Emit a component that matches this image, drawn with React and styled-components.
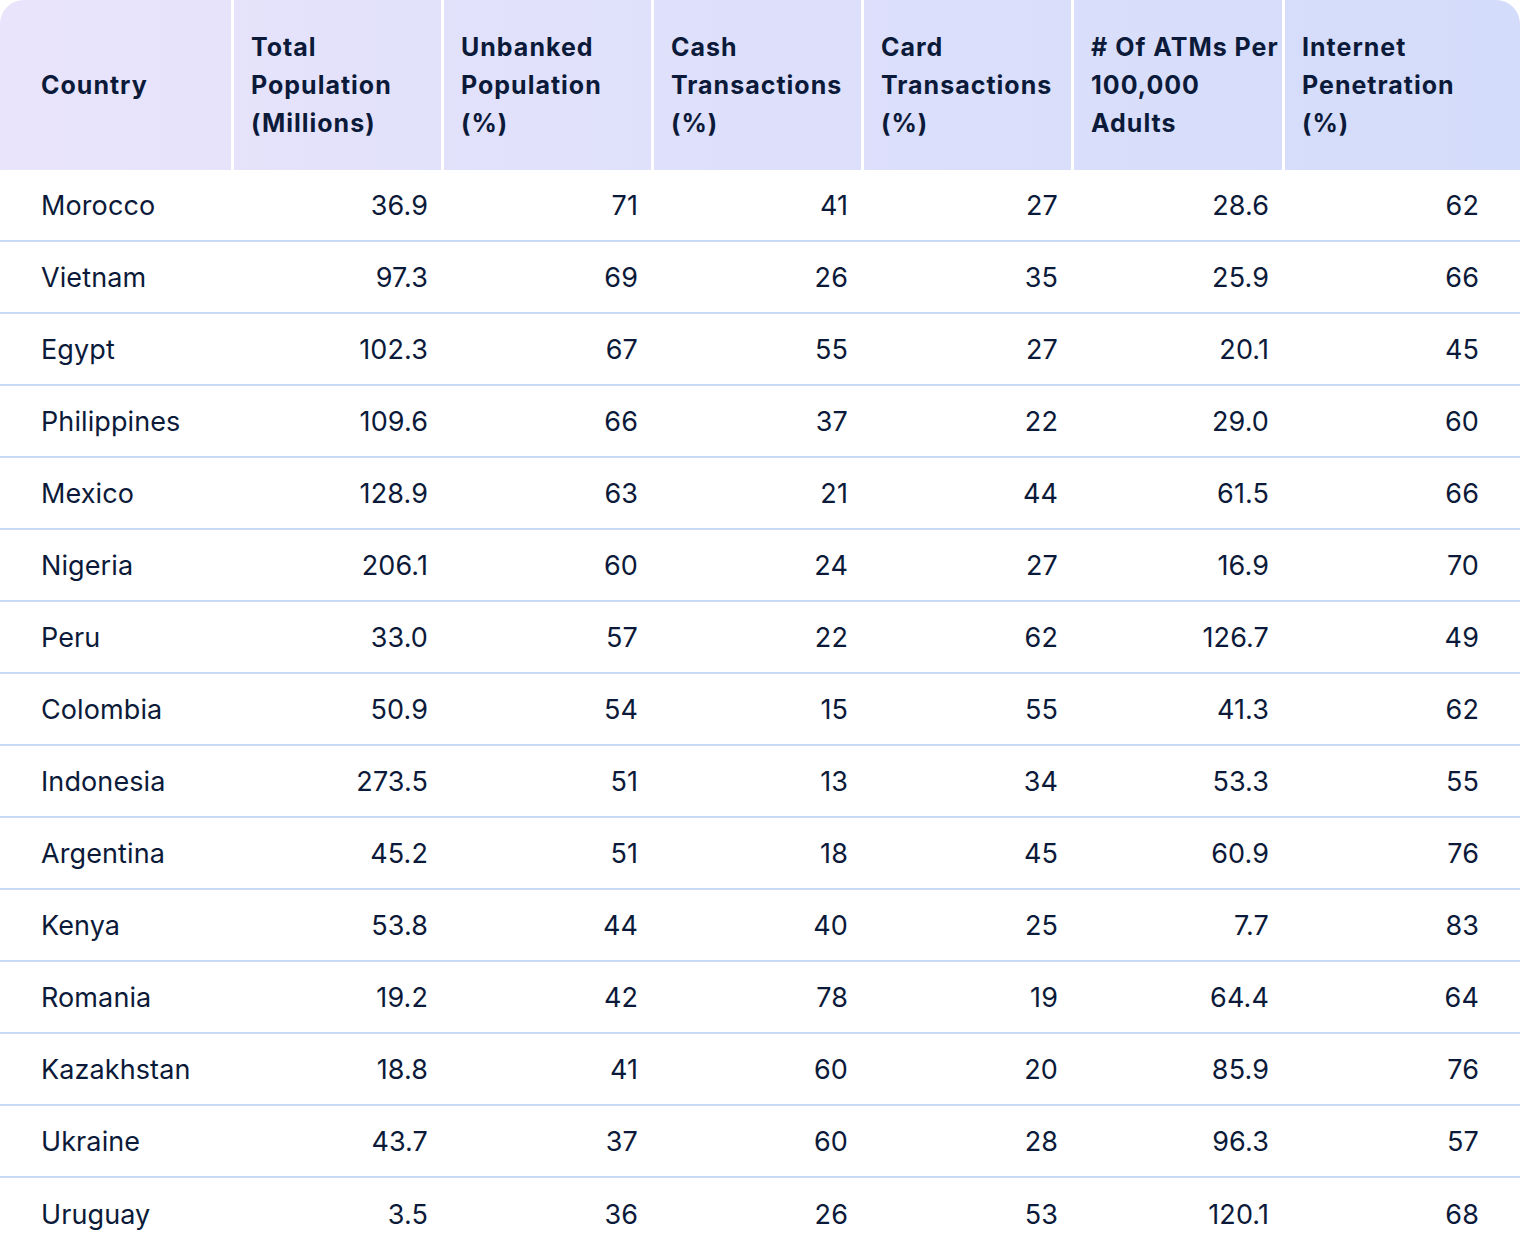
import React from "react";
import styled, { createGlobalStyle } from "styled-components";

const Global = createGlobalStyle`
  html, body { margin: 0; padding: 0; background: #ffffff; }
  body { font-family: Inter, "Noto Sans", sans-serif; color: #0c1a3a; }
`;

const cols = "231px 210px 210px 210px 210px 211px 1fr";

const Table = styled.div`
  width: 1520px;
  display: flex;
  flex-direction: column;
`;

const HeadRow = styled.div`
  display: grid;
  grid-template-columns: ${cols};
  height: 170px;
  border-radius: 24px 24px 0 0;
  background: linear-gradient(90deg, #e9e4fb 0%, #dfe0fb 45%, #d3dcfa 100%);
  overflow: hidden;
`;

const HeadCell = styled.div`
  display: flex;
  align-items: center;
  box-sizing: border-box;
  padding: 0 ${(p) => (p.$last ? "41px" : "3px")} 0 ${(p) => (p.$first ? "41px" : "17px")};
  border-left: ${(p) => (p.$first ? "none" : "3px solid #ffffff")};
  font-family: Inter, "Noto Sans", sans-serif;
  font-weight: 700;
  font-size: 25px;
  line-height: 38px;
  letter-spacing: 1px;
  color: #0c1a3a;
`;

const Row = styled.div`
  display: grid;
  grid-template-columns: ${cols};
  height: 72px;
  box-sizing: border-box;
  border-bottom: 2px solid #c9daf4;
  &:last-child {
    border-bottom: none;
  }
`;

const Cell = styled.div`
  display: flex;
  align-items: center;
  justify-content: ${(p) => (p.$first ? "flex-start" : "flex-end")};
  box-sizing: border-box;
  padding: 0 ${(p) => (p.$last ? "41px" : "13px")} 0 ${(p) => (p.$first ? "41px" : "17px")};
  font-size: 27px;
  font-weight: 400;
  letter-spacing: 0.1px;
  color: #0c1a3a;
`;

const headers = [
  "Country",
  "Total Population (Millions)",
  "Unbanked Population (%)",
  "Cash Transactions (%)",
  "Card Transactions (%)",
  "# Of ATMs Per 100,000 Adults",
  "Internet Penetration (%)",
];

const rows = [
  ["Morocco", "36.9", "71", "41", "27", "28.6", "62"],
  ["Vietnam", "97.3", "69", "26", "35", "25.9", "66"],
  ["Egypt", "102.3", "67", "55", "27", "20.1", "45"],
  ["Philippines", "109.6", "66", "37", "22", "29.0", "60"],
  ["Mexico", "128.9", "63", "21", "44", "61.5", "66"],
  ["Nigeria", "206.1", "60", "24", "27", "16.9", "70"],
  ["Peru", "33.0", "57", "22", "62", "126.7", "49"],
  ["Colombia", "50.9", "54", "15", "55", "41.3", "62"],
  ["Indonesia", "273.5", "51", "13", "34", "53.3", "55"],
  ["Argentina", "45.2", "51", "18", "45", "60.9", "76"],
  ["Kenya", "53.8", "44", "40", "25", "7.7", "83"],
  ["Romania", "19.2", "42", "78", "19", "64.4", "64"],
  ["Kazakhstan", "18.8", "41", "60", "20", "85.9", "76"],
  ["Ukraine", "43.7", "37", "60", "28", "96.3", "57"],
  ["Uruguay", "3.5", "36", "26", "53", "120.1", "68"],
];

export default function App() {
  return (
    <>
      <Global />
      <Table>
        <HeadRow>
          {headers.map((h, i) => (
            <HeadCell key={h} $first={i === 0} $last={i === headers.length - 1}>
              {h}
            </HeadCell>
          ))}
        </HeadRow>
        {rows.map((r) => (
          <Row key={r[0]}>
            {r.map((v, i) => (
              <Cell key={i} $first={i === 0} $last={i === r.length - 1}>
                {v}
              </Cell>
            ))}
          </Row>
        ))}
      </Table>
    </>
  );
}
